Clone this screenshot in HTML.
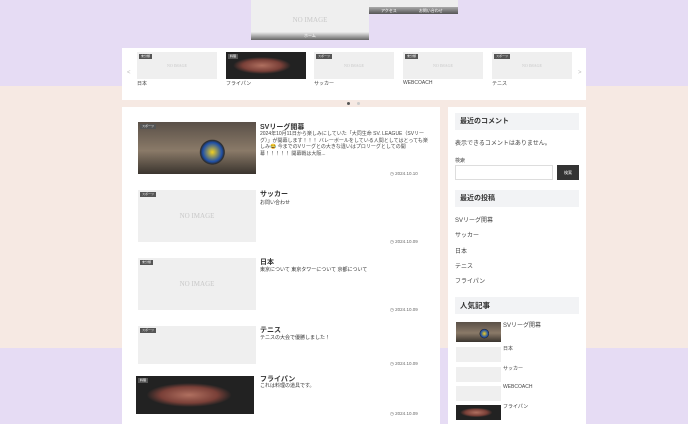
<!DOCTYPE html><html><head><meta charset="utf-8"><style>
*{margin:0;padding:0;box-sizing:border-box}
body{width:688px;height:424px;overflow:hidden;position:relative;font-family:"Liberation Sans","Noto Sans CJK JP",sans-serif;color:#333;
background:linear-gradient(#e6dcf4 0,#e6dcf4 86px,#f6e9e3 86px,#f6e9e3 348px,#e6dcf4 348px)}
.a{position:absolute}
.noimg{background:#efefef;color:#c8c8c8;font-family:"Liberation Serif",serif;display:flex;align-items:center;justify-content:center}
.tag{position:absolute;left:2px;top:2px;background:#555;color:#fff;font-size:3px;padding:1px 2px;line-height:3px}
.meat{background:radial-gradient(ellipse 40% 35% at 45% 50%,#b07060,#7a4038 60%,#222 90%)}
.ball{background:radial-gradient(circle at 63% 58%,#f2d020 0,#1e4fa8 12%,#2a2a2a 15%,transparent 16%),linear-gradient(#5a5048,#8a7a68 55%,#3a342e)}
.w{background:#fff}
.h{background:#f2f3f5;font-size:7px;font-weight:bold;padding-left:5px;line-height:17px;height:17px}
.t{font-size:7px;font-weight:bold}
.d{font-size:4.5px;color:#666}
.s{font-size:6px;color:#444}
</style></head><body>
<div class="a noimg" style="left:251px;top:0;width:118px;height:40px;font-size:7px">NO IMAGE</div>
<div class="a" style="left:251px;top:32px;width:118px;height:8px;background:linear-gradient(#eee,#666);color:#fff;font-size:4px;text-align:center;line-height:8px">ホーム</div>
<div class="a" style="left:369px;top:0;width:89px;height:8px;background:#eee"></div>
<div class="a" style="left:369px;top:7px;width:89px;height:7px;background:linear-gradient(#aaa,#555);color:#fff;font-size:4px;line-height:7px"><span style="margin-left:12px">アクセス</span><span style="margin-left:22px">お問い合わせ</span></div>

<div class="a w" style="left:122px;top:48px;width:464px;height:52px"></div>
<div class="a" style="left:127px;top:70px;font-size:6px;color:#bbb">&lt;</div>
<div class="a" style="left:578px;top:70px;font-size:6px;color:#bbb">&gt;</div>
<div class="a noimg" style="left:137px;top:52px;width:80px;height:27px;font-size:4px">NO IMAGE<span class="tag">未分類</span></div>
<div class="a meat" style="left:226px;top:52px;width:80px;height:27px"><span class="tag">料理</span></div>
<div class="a noimg" style="left:314px;top:52px;width:80px;height:27px;font-size:4px">NO IMAGE<span class="tag">スポーツ</span></div>
<div class="a noimg" style="left:403px;top:52px;width:80px;height:27px;font-size:4px">NO IMAGE<span class="tag">未分類</span></div>
<div class="a noimg" style="left:492px;top:52px;width:80px;height:27px;font-size:4px">NO IMAGE<span class="tag">スポーツ</span></div>
<div class="a s" style="left:137px;top:80px;font-size:5px">日本</div>
<div class="a s" style="left:226px;top:80px;font-size:5px">フライパン</div>
<div class="a s" style="left:314px;top:80px;font-size:5px">サッカー</div>
<div class="a s" style="left:403px;top:80px;font-size:5px">WEBCOACH</div>
<div class="a s" style="left:492px;top:80px;font-size:5px">テニス</div>
<div class="a" style="left:347px;top:102px;width:3px;height:3px;border-radius:50%;background:#555"></div>
<div class="a" style="left:357px;top:102px;width:3px;height:3px;border-radius:50%;background:#ccc"></div>

<div class="a w" style="left:122px;top:107px;width:318px;height:317px"></div>
<div class="a ball" style="left:138px;top:122px;width:118px;height:52px"><span class="tag">スポーツ</span></div>
<div class="a t" style="left:260px;top:122px">SVリーグ開幕</div>
<div class="a" style="left:260px;top:131px;width:170px;font-size:5px;line-height:6.5px;color:#444">2024年10月11日から楽しみにしていた「大同生命 SV. LEAGUE（SVリーグ）」が開幕します！！！ バレーボールをしている人間としてはとっても楽しみ😂 今までのVリーグとの大きな違いはプロリーグとしての開幕！！！！！ 開幕戦は大阪...</div>
<div class="a d" style="left:390px;top:171px">◷ 2024.10.10</div>

<div class="a noimg" style="left:138px;top:190px;width:118px;height:52px;font-size:7px">NO IMAGE<span class="tag">スポーツ</span></div>
<div class="a t" style="left:260px;top:189px">サッカー</div>
<div class="a" style="left:260px;top:199px;font-size:5px">お問い合わせ</div>
<div class="a d" style="left:390px;top:239px">◷ 2024.10.09</div>

<div class="a noimg" style="left:138px;top:258px;width:118px;height:52px;font-size:7px">NO IMAGE<span class="tag">未分類</span></div>
<div class="a t" style="left:260px;top:257px">日本</div>
<div class="a" style="left:260px;top:266px;font-size:5px">東京について 東京タワーについて 京都について</div>
<div class="a d" style="left:390px;top:307px">◷ 2024.10.09</div>

<div class="a noimg" style="left:138px;top:326px;width:118px;height:38px;font-size:7px"><span class="tag">スポーツ</span></div>
<div class="a t" style="left:260px;top:325px">テニス</div>
<div class="a" style="left:260px;top:334px;font-size:5px">テニスの大会で優勝しました！</div>
<div class="a d" style="left:390px;top:361px">◷ 2024.10.09</div>

<div class="a meat" style="left:136px;top:376px;width:118px;height:38px"><span class="tag">料理</span></div>
<div class="a t" style="left:260px;top:374px">フライパン</div>
<div class="a" style="left:260px;top:382px;font-size:5px">これは料理の道具です。</div>
<div class="a d" style="left:390px;top:411px">◷ 2024.10.09</div>

<div class="a w" style="left:448px;top:107px;width:138px;height:317px"></div>
<div class="a h" style="left:455px;top:113px;width:124px">最近のコメント</div>
<div class="a s" style="left:455px;top:138px">表示できるコメントはありません。</div>
<div class="a s" style="left:455px;top:157px;font-size:5px">検索</div>
<div class="a" style="left:455px;top:165px;width:98px;height:15px;border:1px solid #ddd"></div>
<div class="a" style="left:557px;top:165px;width:22px;height:15px;background:#333;color:#fff;font-size:4px;text-align:center;line-height:15px">検索</div>
<div class="a h" style="left:455px;top:190px;width:124px">最近の投稿</div>
<div class="a s" style="left:455px;top:215px">SVリーグ開幕</div>
<div class="a s" style="left:455px;top:230px">サッカー</div>
<div class="a s" style="left:455px;top:246px">日本</div>
<div class="a s" style="left:455px;top:261px">テニス</div>
<div class="a s" style="left:455px;top:276px">フライパン</div>
<div class="a h" style="left:455px;top:297px;width:124px;font-size:7.5px">人気記事</div>
<div class="a ball" style="left:456px;top:322px;width:45px;height:20px"></div>
<div class="a s" style="left:503px;top:320px">SVリーグ開幕</div>
<div class="a noimg" style="left:456px;top:347px;width:45px;height:15px"></div>
<div class="a s" style="left:503px;top:345px;font-size:5px">日本</div>
<div class="a noimg" style="left:456px;top:367px;width:45px;height:15px"></div>
<div class="a s" style="left:503px;top:365px;font-size:5px">サッカー</div>
<div class="a noimg" style="left:456px;top:386px;width:45px;height:15px"></div>
<div class="a s" style="left:503px;top:384px;font-size:5px">WEBCOACH</div>
<div class="a meat" style="left:456px;top:405px;width:45px;height:15px"></div>
<div class="a s" style="left:503px;top:403px;font-size:5px">フライパン</div>
</body></html>
